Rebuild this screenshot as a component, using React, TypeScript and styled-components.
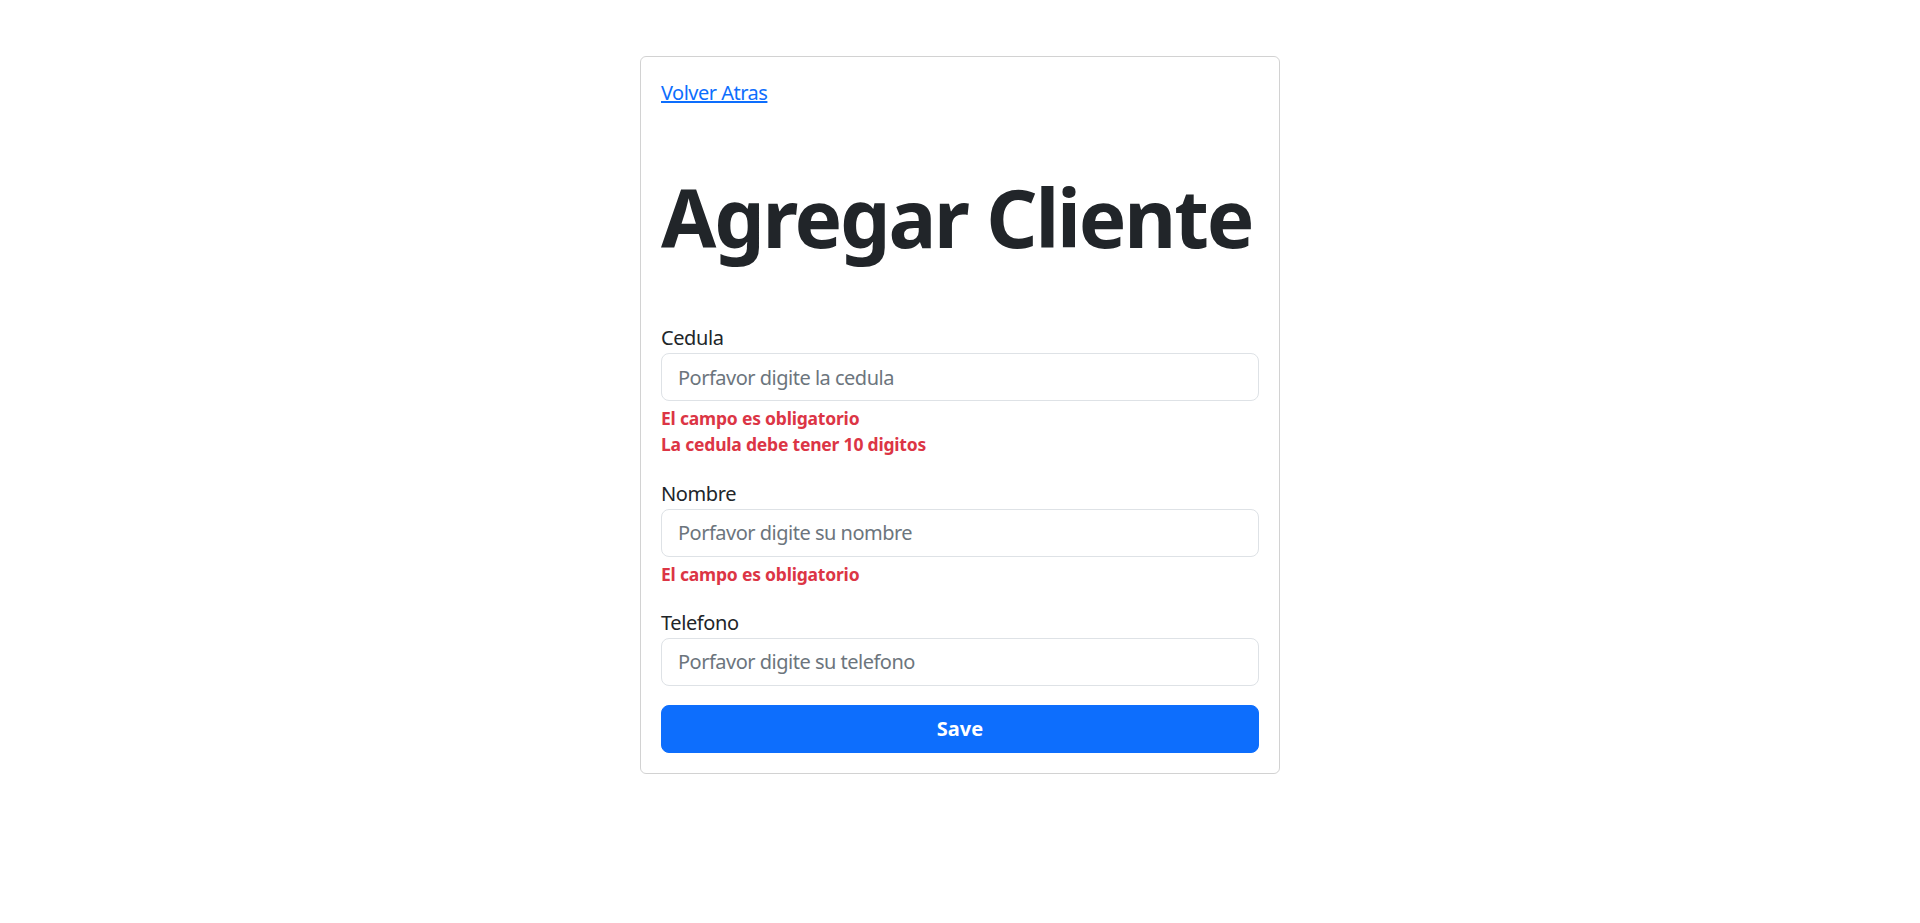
import React from "react";
import styled, { createGlobalStyle } from "styled-components";

const GlobalStyle = createGlobalStyle`
  *, *::before, *::after { box-sizing: border-box; }
  html, body { margin: 0; padding: 0; background: #ffffff; }
  body {
    font-family: "Noto Sans", "Open Sans", sans-serif;
    font-size: 20px;
    line-height: 1.5;
    color: #212529;
  }
`;

const Page = styled.main`
  display: flex;
  justify-content: center;
  padding-top: 56px;
`;

const Card = styled.section`
  width: 640px;
  border: 1px solid rgba(0, 0, 0, 0.175);
  border-radius: 6px;
  padding: 20px;
  display: flex;
  flex-direction: column;
`;

const BackLink = styled.a`
  align-self: flex-start;
  margin-top: 1px;
  margin-bottom: -1px;
  color: #0d6efd;
  text-decoration: underline;
  font-size: 20px;
  line-height: 30px;
  letter-spacing: -0.5px;
  cursor: pointer;
`;

const Title = styled.h1`
  margin: 62px 0 58px;
  font-size: 80px;
  font-weight: 700;
  line-height: 96px;
  color: #212529;
  letter-spacing: -2.2px;
  white-space: nowrap;
`;

const Field = styled.div<{ $gap: number }>`
  display: flex;
  flex-direction: column;
  margin-bottom: ${(p) => p.$gap}px;
`;

const Label = styled.label`
  font-size: 20px;
  line-height: 30px;
  letter-spacing: -0.4px;
  color: #212529;
`;

const Input = styled.input`
  display: block;
  width: 100%;
  height: 48px;
  padding: 8px 16px;
  font-family: inherit;
  font-size: 20px;
  line-height: 30px;
  letter-spacing: -0.5px;
  color: #212529;
  background: #fff;
  border: 1px solid #dee2e6;
  border-radius: 8px;
  outline: none;
  &::placeholder { color: #6c757d; opacity: 1; }
`;

const FeedbackList = styled.div`
  margin-top: 4px;
  display: flex;
  flex-direction: column;
`;

const Feedback = styled.span`
  font-size: 17.5px;
  line-height: 26.25px;
  font-weight: 700;
  letter-spacing: -0.2px;
  color: #dc3545;
`;

const SaveButton = styled.button`
  width: 100%;
  height: 48px;
  padding: 8px 16px;
  border: 1px solid #0d6efd;
  border-radius: 8px;
  background: #0d6efd;
  color: #fff;
  font-family: inherit;
  font-size: 20px;
  font-weight: 700;
  line-height: 30px;
  cursor: pointer;
`;

type FieldDef = { id: string; label: string; placeholder: string; errors: string[]; gap: number };

const fields: FieldDef[] = [
  { id: "cedula", label: "Cedula", placeholder: "Porfavor digite la cedula", errors: ["El campo es obligatorio", "La cedula debe tener 10 digitos"], gap: 21 },
  { id: "nombre", label: "Nombre", placeholder: "Porfavor digite su nombre", errors: ["El campo es obligatorio"], gap: 21 },
  { id: "telefono", label: "Telefono", placeholder: "Porfavor digite su telefono", errors: [], gap: 19 },
];

export default function App() {
  return (
    <>
      <GlobalStyle />
      <Page>
        <Card>
          <BackLink href="#">Volver Atras</BackLink>
          <Title>Agregar Cliente</Title>
          {fields.map((f) => (
            <Field key={f.id} $gap={f.gap}>
              <Label htmlFor={f.id}>{f.label}</Label>
              <Input id={f.id} placeholder={f.placeholder} />
              {f.errors.length > 0 && (
                <FeedbackList>
                  {f.errors.map((e) => (
                    <Feedback key={e}>{e}</Feedback>
                  ))}
                </FeedbackList>
              )}
            </Field>
          ))}
          <SaveButton type="button">Save</SaveButton>
        </Card>
      </Page>
    </>
  );
}
